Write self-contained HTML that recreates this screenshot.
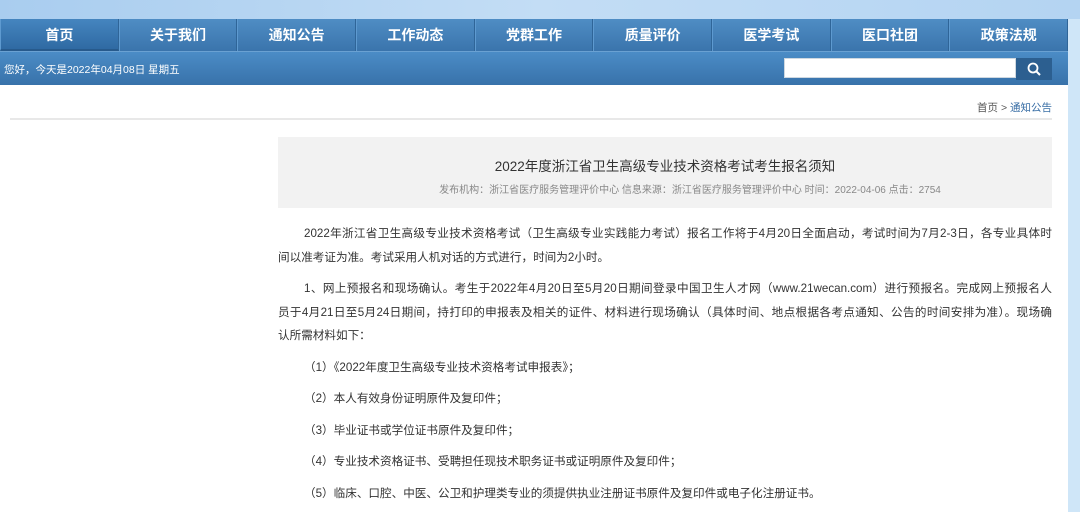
<!DOCTYPE html>
<html><head><meta charset="utf-8"><style>
html,body{margin:0;width:1080px;height:512px;overflow:hidden;background:#cfe6f8;font-family:"Liberation Sans","Noto Sans CJK SC",sans-serif;}
.top{height:19px;background:linear-gradient(90deg,#a9cdef,#c3ddf5 50%,#b4d4f2);}
.page{position:absolute;left:0;top:19px;width:1068px;height:493px;background:#fff;overflow:hidden;}
.nav{height:32px;background:linear-gradient(#4f8dc4,#3a74ac);display:flex;}
.nav div{flex:1;color:#fff;font-weight:bold;font-size:14px;text-align:center;line-height:32px;border-right:1px solid #2f6598;border-left:1px solid #5e9ad0;}
.nav div.on{background:linear-gradient(#4585bf,#2f6aa3);border-bottom:2px solid #275a8c;}
.sub{height:33px;background:linear-gradient(#4b8cc6,#3872aa);position:relative;border-top:1px solid #6aa1d2;}
.sub .d{position:absolute;left:4px;top:10px;color:#fff;font-size:10.5px;}
.sub .in{position:absolute;left:784px;top:6px;width:232px;height:20px;background:#fff;border:1px solid #cfd8e0;box-sizing:border-box;}
.sub .bt{position:absolute;left:1016px;top:6px;width:36px;height:22px;background:#2c5f90;}
.bc{position:absolute;right:16px;top:81px;font-size:10.5px;color:#555;}
.bc span{color:#3a6fa6;}
.line{position:absolute;left:10px;top:99px;width:1042px;border-top:2px solid #e8e8e8;}
.box{position:absolute;left:278px;top:118px;width:774px;height:71px;background:#f2f2f2;text-align:center;}
.box h1{margin:0;padding-top:18px;font-size:13.5px;font-weight:normal;color:#333;}
.box p{margin:6px 0 0;font-size:10px;color:#888;padding-left:50px;}
.art{position:absolute;left:278px;top:203px;width:774px;font-size:11.6px;color:#333;line-height:23.5px;}
.art p{margin:0 0 8px;}
.art p>span{display:block;}
.art .j{text-align:justify;text-align-last:justify;}
.art .i{padding-left:26px;}
</style></head><body>
<div class="top"></div>
<div class="page">
<div class="nav"><div class="on">首页</div><div>关于我们</div><div>通知公告</div><div>工作动态</div><div>党群工作</div><div>质量评价</div><div>医学考试</div><div>医口社团</div><div>政策法规</div></div>
<div class="sub"><div class="d">您好，今天是2022年04月08日 星期五</div><div class="in"></div><div class="bt"><svg width="36" height="22"><circle cx="17" cy="10" r="4.5" fill="none" stroke="#fff" stroke-width="1.8"/><line x1="20.5" y1="13.5" x2="24" y2="17" stroke="#fff" stroke-width="2"/></svg></div></div>
<div class="bc">首页 &gt; <span>通知公告</span></div>
<div class="line"></div>
<div class="box"><h1>2022年度浙江省卫生高级专业技术资格考试考生报名须知</h1><p>发布机构：浙江省医疗服务管理评价中心 信息来源：浙江省医疗服务管理评价中心 时间：2022-04-06 点击：2754</p></div>
<div class="art">
<p><span class="j i">2022年浙江省卫生高级专业技术资格考试（卫生高级专业实践能力考试）报名工作将于4月20日全面启动，考试时间为7月2-3日，各专业具体时</span><span>间以准考证为准。考试采用人机对话的方式进行，时间为2小时。</span></p>
<p><span class="j i">1、网上预报名和现场确认。考生于2022年4月20日至5月20日期间登录中国卫生人才网（www.21wecan.com）进行预报名。完成网上预报名人</span><span class="j">员于4月21日至5月24日期间，持打印的申报表及相关的证件、材料进行现场确认（具体时间、地点根据各考点通知、公告的时间安排为准）。现场确</span><span>认所需材料如下：</span></p>
<p><span class="i">（1）《2022年度卫生高级专业技术资格考试申报表》；</span></p>
<p><span class="i">（2）本人有效身份证明原件及复印件；</span></p>
<p><span class="i">（3）毕业证书或学位证书原件及复印件；</span></p>
<p><span class="i">（4）专业技术资格证书、受聘担任现技术职务证书或证明原件及复印件；</span></p>
<p><span class="i">（5）临床、口腔、中医、公卫和护理类专业的须提供执业注册证书原件及复印件或电子化注册证书。</span></p>
</div>
</div>
</body></html>
